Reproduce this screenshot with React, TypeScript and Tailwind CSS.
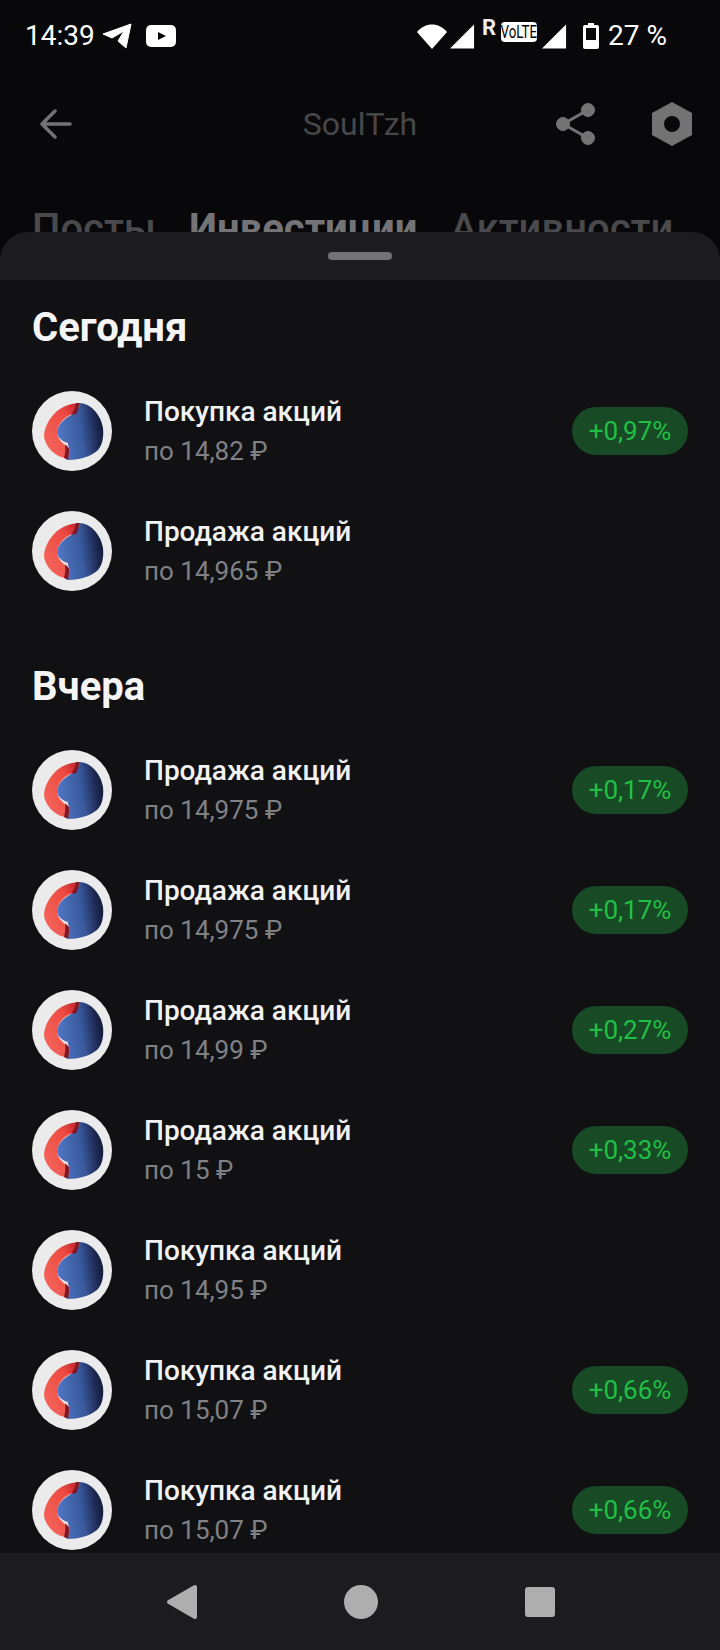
import React from "react";

const font = { fontFamily: "Roboto, 'Noto Sans', sans-serif" };

function Logo({ id }: { id: string }) {
  return (
    <svg width="80" height="80" viewBox="0 0 80 80" className="shrink-0">
      <defs>
        <linearGradient id={`b${id}`} x1="0.05" y1="0.55" x2="1" y2="0.4">
          <stop offset="0" stopColor="#4e74c2" />
          <stop offset="0.5" stopColor="#3a5a9e" />
          <stop offset="0.85" stopColor="#1c2750" />
          <stop offset="1" stopColor="#121a38" />
        </linearGradient>
        <linearGradient id={`r${id}`} x1="0" y1="0.8" x2="0.9" y2="0">
          <stop offset="0" stopColor="#f4655a" />
          <stop offset="0.7" stopColor="#ee4a42" />
          <stop offset="1" stopColor="#c4252f" />
        </linearGradient>
      </defs>
      <circle cx="40" cy="40" r="40" fill="#ebebeb" />
      <path
        d="M47 12 C59 12 69 24 71 37 C72 47 70 55 65 60 C58 66 46 69 36 69 L37 60 C38 56 36 53 32 51 C28 48 25 45 25 41 C26 31 36 25 44 22 C46 19 47 15 47 12 Z"
        fill={`url(#b${id})`}
      />
      <path
        d="M46 12 C46 16 45 20 43 22 C34 25 26 31 25 41 C25 46 29 51 35 56 L33 67 C22 65 14 56 12 46 C12 38 16 29 23 22 C30 15 38 13 46 12 Z"
        fill={`url(#r${id})`}
      />
      <path d="M44 12 L47 12 C47 17 46 20 44 23 L39 24 C42 20 44 16 44 12 Z" fill="#7f1526" />
      <path d="M33 53 L37 57 C37 61 37 65 36 69 L32 67 C33 63 34 58 33 53 Z" fill="#7f1526" />
      <path d="M26 46 C28 49 32 51 36 52 L36 55 C32 53 28 50 26 46 Z" fill="#f6dcd8" />
    </svg>
  );
}

function Row({ id, title, price, badge }: { id: string; title: string; price: string; badge?: string }) {
  return (
    <div className="flex h-[120px] items-center pl-8 pr-8">
      <Logo id={id} />
      <div className="ml-8 flex-1">
        <div className="text-[28px] leading-[40px] font-medium text-[#f2f2f3]">{title}</div>
        <div className="text-[26px] leading-[38px] text-[#808185]">{price}</div>
      </div>
      {badge && (
        <div className="flex h-12 w-[116px] items-center justify-center rounded-full bg-[#174a25] text-[26px] text-[#22bf45]">
          {badge}
        </div>
      )}
    </div>
  );
}

function Heading({ children, className }: { children: React.ReactNode; className?: string }) {
  return <div className={`pl-8 text-[40px] leading-[44px] font-bold text-[#f5f5f6] ${className ?? ""}`}>{children}</div>;
}

export default function App() {
  return (
    <div className="flex h-[1650px] w-[720px] flex-col overflow-hidden bg-[#08080a]" style={font}>
      <div className="h-[232px] shrink-0 overflow-hidden">
        {/* status bar */}
        <div className="flex h-[72px] items-center pl-[25px] pr-[53px] text-white">
          <span className="text-[28px] leading-none">14:39</span>
          <svg width="30" height="26" viewBox="0 0 30 26" className="ml-[7px]">
            <path d="M1 11 L29 1 L24 25 L16 18 L22 8 L10 15 Z" fill="#fff" strokeLinejoin="round" stroke="#fff" strokeWidth="1" />
          </svg>
          <svg width="30" height="22" viewBox="0 0 30 22" className="ml-[14px]">
            <rect width="30" height="22" rx="5" fill="#fff" />
            <path d="M12 7 L20 11 L12 15 Z" fill="#08080a" />
          </svg>
          <div className="flex-1" />
          <svg width="30" height="25" viewBox="0 0 30 25">
            <path d="M0 8 C8 -2 22 -2 30 8 L15 25 Z" fill="#fff" />
          </svg>
          <svg width="25" height="25" viewBox="0 0 26 25" className="ml-[3px]">
            <path d="M25 0 V25 H0 Z" fill="#fff" />
          </svg>
          <div className="ml-[7px] flex items-start">
            <span className="mb-[16px] text-[22px] leading-none font-bold text-[#eee]">R</span>
            <span className="mt-[5px] ml-[5px] flex h-5 w-9 items-center justify-center rounded-[4px] bg-white text-black">
              <span className="inline-block scale-x-[0.74] text-[18px] leading-none">VoLTE</span>
            </span>
          </div>
          <svg width="25" height="25" viewBox="0 0 26 25" className="ml-[5px]">
            <path d="M25 0 V25 H0 Z" fill="#fff" />
          </svg>
          <svg width="16" height="26" viewBox="0 0 16 26" className="ml-[16px]">
            <path fillRule="evenodd" d="M5 0 H11 V2 H14 Q16 2 16 4 V24 Q16 26 14 26 H2 Q0 26 0 24 V4 Q0 2 2 2 H5 Z M3 5 V17 H13 V5 Z" fill="#fff" />
          </svg>
          <span className="ml-[9px] text-[28px] leading-none whitespace-pre">27 %</span>
        </div>
        {/* toolbar */}
        <div className="flex h-[104px] items-center">
          <div className="flex w-[164px] items-center pl-[40px]">
            <svg width="32" height="30" viewBox="0 0 32 30" fill="none" stroke="#737373" strokeWidth="3.5" strokeLinecap="round" strokeLinejoin="round">
              <path d="M30 15 H2 M15 2 L2 15 L15 28" />
            </svg>
          </div>
          <div className="flex-1 text-center text-[32px] text-[#47474a]">SoulTzh</div>
          <div className="flex w-[164px] items-center">
            <svg width="40" height="42" viewBox="0 0 40 42" fill="#737373" stroke="#737373">
              <circle cx="7" cy="21" r="6.5" />
              <circle cx="32" cy="7" r="6.5" />
              <circle cx="32" cy="35" r="6.5" />
              <path d="M7 21 L32 7 M7 21 L32 35" strokeWidth="3" />
            </svg>
            <svg width="42" height="44" viewBox="0 0 42 44" className="ml-[55px]">
              <path fillRule="evenodd" d="M21 0 L41 11 V33 L21 44 L1 33 V11 Z M21 14 A8 8 0 1 0 21 30 A8 8 0 1 0 21 14 Z" fill="#737373" />
            </svg>
          </div>
        </div>
        {/* tabs */}
        <div className="mt-[31px] flex pl-[32px] text-[40px] leading-[44px] font-medium whitespace-nowrap">
          <span className="text-[#4a4a4c]">Посты</span>
          <span className="ml-[33px] font-bold text-[#747476]">Инвестиции</span>
          <span className="ml-[33px] text-[#4a4a4c]">Активности</span>
        </div>
      </div>

      {/* sheet */}
      <div className="flex min-h-0 flex-1 flex-col overflow-hidden rounded-t-[28px] bg-[#111113]">
        <div className="flex h-[48px] shrink-0 justify-center bg-[#1c1c1f] pt-[20px]">
          <div className="h-2 w-16 rounded-full bg-[#737375]" />
        </div>
        <div className="min-h-0 flex-1 overflow-hidden">
          <Heading className="mt-[26px] mb-[21px]">Сегодня</Heading>
          <Row id="a" title="Покупка акций" price="по 14,82 ₽" badge="+0,97%" />
          <Row id="b" title="Продажа акций" price="по 14,965 ₽" />
          <Heading className="mt-[54px] mb-[21px]">Вчера</Heading>
          <Row id="c" title="Продажа акций" price="по 14,975 ₽" badge="+0,17%" />
          <Row id="d" title="Продажа акций" price="по 14,975 ₽" badge="+0,17%" />
          <Row id="e" title="Продажа акций" price="по 14,99 ₽" badge="+0,27%" />
          <Row id="f" title="Продажа акций" price="по 15 ₽" badge="+0,33%" />
          <Row id="g" title="Покупка акций" price="по 14,95 ₽" />
          <Row id="h" title="Покупка акций" price="по 15,07 ₽" badge="+0,66%" />
          <Row id="i" title="Покупка акций" price="по 15,07 ₽" badge="+0,66%" />
        </div>
        {/* nav */}
        <div className="flex h-[97px] shrink-0 items-center justify-center bg-[#1c1c1f]">
          <svg width="32" height="36" viewBox="0 0 32 36">
            <path d="M29 3 V33 L3 18 Z" fill="#aeaeae" stroke="#aeaeae" strokeWidth="4" strokeLinejoin="round" />
          </svg>
          <div className="ml-[146px] h-[34px] w-[34px] rounded-full bg-[#aeaeae]" />
          <div className="ml-[147px] h-[30px] w-[30px] rounded-[3px] bg-[#aeaeae]" />
        </div>
      </div>
    </div>
  );
}
